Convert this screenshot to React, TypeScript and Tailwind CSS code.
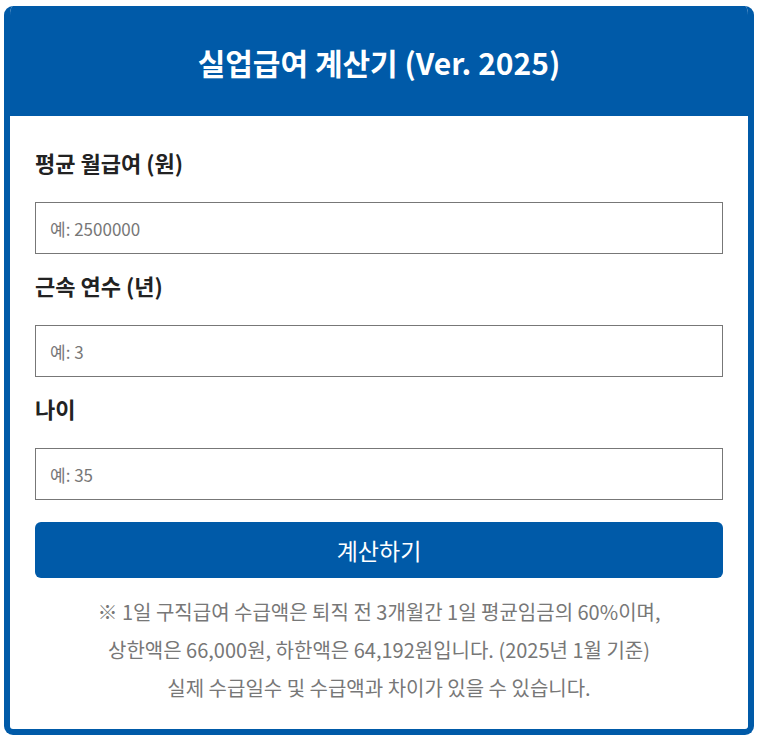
export default function App() {
  const font = { fontFamily: '"Noto Sans CJK KR", "Noto Sans", sans-serif' };
  return (
    <div className="min-h-screen bg-white px-[4px] pt-[6px]" style={font}>
      <div className="w-[750px] overflow-hidden rounded-[9px] border-[6px] border-t-0 border-[#005aa8] bg-white">
        <div className="flex h-[110px] items-center justify-center bg-[#005aa8] pt-[2px]">
          <h1 className="text-[30px] font-bold text-white">실업급여 계산기 (Ver. 2025)</h1>
        </div>
        <div className="px-[25px] pb-[22px] pt-[31px]">
          <Field label="평균 월급여 (원)" placeholder="예: 2500000" first />
          <Field label="근속 연수 (년)" placeholder="예: 3" />
          <Field label="나이" placeholder="예: 35" />
          <button
            type="button"
            className="mt-[22px] h-[56px] w-full rounded-[6px] bg-[#005aa8] text-[23px] text-white"
          >
            계산하기
          </button>
          <p className="mt-[15px] text-center text-[20px] leading-[38px] text-[#777777]">
            ※ 1일 구직급여 수급액은 퇴직 전 3개월간 1일 평균임금의 60%이며,
            <br />
            상한액은 66,000원, 하한액은 64,192원입니다. (2025년 1월 기준)
            <br />
            실제 수급일수 및 수급액과 차이가 있을 수 있습니다.
          </p>
        </div>
      </div>
    </div>
  );
}

function Field({ label, placeholder, first }: { label: string; placeholder: string; first?: boolean }) {
  return (
    <div>
      <label className={`block text-[22px] font-bold leading-[30px] text-[#222222] ${first ? "" : "mt-[16px]"} mb-[25px]`}>
        {label}
      </label>
      <input
        type="text"
        placeholder={placeholder}
        className="h-[52px] w-full border border-[#777777] px-[14px] text-[17px] text-[#333333] placeholder:text-[#777777] focus:outline-none"
      />
    </div>
  );
}
